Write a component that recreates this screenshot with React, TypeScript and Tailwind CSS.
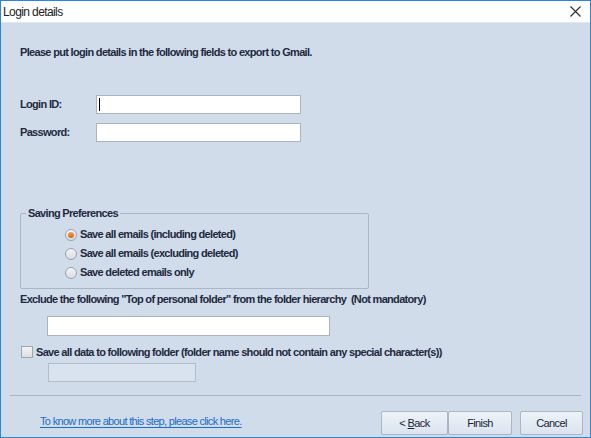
import React from 'react';

const font = { fontFamily: '"Liberation Sans", Arial, sans-serif' };

function Radio({ checked, label }: { checked?: boolean; label: string }) {
  return (
    <label className="flex items-center h-[19px] pl-[44px] gap-[3px]">
      <span className="relative w-[12px] h-[12px] rounded-full border border-[#9aa3ad] bg-gradient-to-b from-[#f4f4f4] to-[#d9dde2] flex items-center justify-center">
        {checked && <span className="w-[6px] h-[6px] rounded-full bg-gradient-to-b from-[#f7a24a] to-[#d4620f]" />}
      </span>
      <span className="font-bold">{label}</span>
    </label>
  );
}

function Button({ children, className = '' }: { children: React.ReactNode; className?: string }) {
  return (
    <button
      className={`h-[24px] border border-[#a9b6c6] rounded-[2px] bg-gradient-to-b from-[#edf2f8] to-[#dbe4ef] text-[11px] text-[#1b2436] tracking-[-0.6px] ${className}`}
    >
      {children}
    </button>
  );
}

export default function App() {
  return (
    <div
      style={font}
      className="w-[591px] h-[438px] border border-[#2b87d6] flex flex-col text-[11px] text-[#1f2940] overflow-hidden"
    >
      {/* title bar */}
      <div className="h-[22px] bg-white flex items-center justify-between pl-[2px] pr-[8px] border-b border-[#e3e8ee]">
        <span className="text-[12px] text-[#222] tracking-[-0.6px]">Login details</span>
        <svg width="11" height="11" viewBox="0 0 11 11" className="mr-[1px]">
          <path d="M0.5 0.5 L10.5 10.5 M10.5 0.5 L0.5 10.5" stroke="#2a2a2a" strokeWidth="1.1" />
        </svg>
      </div>

      {/* body */}
      <div className="flex-1 bg-[#d0dcea] flex flex-col tracking-[-0.68px]">
        <p className="mt-[22px] ml-[19px] font-bold leading-[14px]">
          Please put login details in the following fields to export to Gmail.
        </p>

        <div className="mt-[36px] ml-[19px] flex flex-col gap-[9px]">
          <div className="flex items-center">
            <span className="w-[76px] font-bold">Login ID:</span>
            <div className="w-[205px] h-[19px] bg-white border border-[#adb4bd] flex items-center pl-[2px]">
              <span className="w-px h-[13px] bg-black" />
            </div>
          </div>
          <div className="flex items-center">
            <span className="w-[76px] font-bold">Password:</span>
            <div className="w-[205px] h-[19px] bg-white border border-[#adb4bd]" />
          </div>
        </div>

        <fieldset className="mt-[64px] ml-[19px] w-[349px] h-[83px] border border-[#aab6c6] rounded-[2px]">
          <legend className="ml-[5px] px-[2px] font-bold leading-[14px]">Saving Preferences</legend>
          <div className="flex flex-col mt-[5px]">
            <Radio checked label="Save all emails (including deleted)" />
            <Radio label="Save all emails (excluding deleted)" />
            <Radio label="Save deleted emails only" />
          </div>
        </fieldset>

        <p className="mt-[3px] ml-[19px] font-bold leading-[14px]">
          Exclude the following &quot;Top of personal folder&quot; from the folder hierarchy&nbsp; (Not mandatory)
        </p>
        <div className="mt-[10px] ml-[46px] w-[283px] h-[20px] bg-white border border-[#adb4bd]" />

        <label className="mt-[9px] ml-[20px] flex items-center gap-[3px] h-[14px]">
          <span className="w-[12px] h-[12px] border border-[#9ea6b0] bg-gradient-to-b from-[#f3f3f3] to-[#dcdfe3]" />
          <span className="font-bold">
            Save all data to following folder (folder name should not contain any special character(s))
          </span>
        </label>
        <div className="mt-[4px] ml-[47px] w-[148px] h-[19px] bg-[#d9e3ef] border border-[#b2bccb]" />

        <div className="mt-[13px] mx-[9px] h-px bg-[#a8b4c3]" />

        <div className="flex items-start justify-between pl-[39px] pr-[7px] mt-[15px]">
          <a href="#" className="mt-[2px] text-[#1a6cc8] underline underline-offset-2">
            To know more about this step, please click here.
          </a>
          <div className="flex">
            <Button className="w-[67px]">
              &lt; <span className="underline">B</span>ack
            </Button>
            <Button className="w-[64px]">Finish</Button>
            <Button className="w-[63px] ml-[8px]">Cancel</Button>
          </div>
        </div>
      </div>
    </div>
  );
}
